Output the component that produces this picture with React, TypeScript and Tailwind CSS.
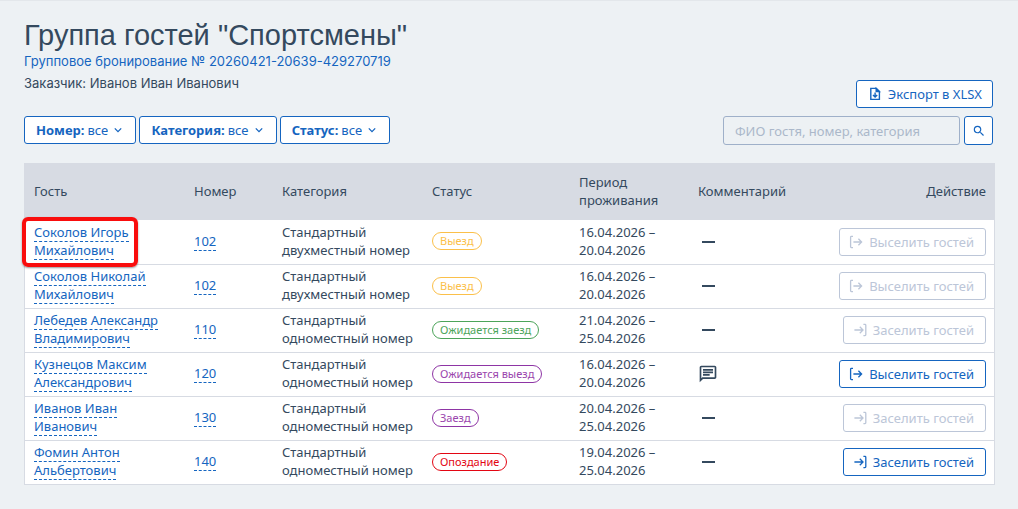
import { MdSearch, MdOutlineChat } from 'react-icons/md';

type Action = 'out' | 'in';

interface Guest {
  name: [string, string];
  room: string;
  category: string;
  status: string;
  tone: string;
  from: string;
  to: string;
  comment?: boolean;
  action: Action;
  enabled?: boolean;
  marked?: boolean;
}

const amber = 'border-[#fbc04a] text-[#fbc04a]';
const green = 'border-[#4ca45a] text-[#4ca45a]';
const purple = 'border-[#8e35a5] text-[#9a45ad]';
const red = 'border-[#e30613] text-[#e30613]';

const guests: Guest[] = [
  { name: ['Соколов Игорь', 'Михайлович'], room: '102', category: 'двухместный номер', status: 'Выезд', tone: amber, from: '16.04.2026', to: '20.04.2026', action: 'out', marked: true },
  { name: ['Соколов Николай', 'Михайлович'], room: '102', category: 'двухместный номер', status: 'Выезд', tone: amber, from: '16.04.2026', to: '20.04.2026', action: 'out' },
  { name: ['Лебедев Александр', 'Владимирович'], room: '110', category: 'одноместный номер', status: 'Ожидается заезд', tone: green, from: '21.04.2026', to: '25.04.2026', action: 'in' },
  { name: ['Кузнецов Максим', 'Александрович'], room: '120', category: 'одноместный номер', status: 'Ожидается выезд', tone: purple, from: '16.04.2026', to: '20.04.2026', comment: true, action: 'out', enabled: true },
  { name: ['Иванов Иван', 'Иванович'], room: '130', category: 'одноместный номер', status: 'Заезд', tone: purple, from: '20.04.2026', to: '25.04.2026', action: 'in' },
  { name: ['Фомин Антон', 'Альбертович'], room: '140', category: 'одноместный номер', status: 'Опоздание', tone: red, from: '19.04.2026', to: '25.04.2026', action: 'in', enabled: true },
];

function ActionIcon({ kind }: { kind: Action }) {
  return (
    <svg viewBox="0 0 14 14" className="h-3.5 w-3.5" fill="none" stroke="currentColor" strokeWidth="1.3" aria-hidden="true">
      {kind === 'out' ? (
        <>
          <path d="M4 1.4H2.4Q1.6 1.4 1.6 2.2V11.8Q1.6 12.6 2.4 12.6H4" />
          <path d="M4.4 7H12.6M9.4 3.8L12.6 7L9.4 10.2" />
        </>
      ) : (
        <>
          <path d="M10.4 1.4H12Q12.8 1.4 12.8 2.2V11.8Q12.8 12.6 12 12.6H10.4" />
          <path d="M1.4 7H10M6.8 3.8L10 7L6.8 10.2" />
        </>
      )}
    </svg>
  );
}

function Filter({ id, label }: { id: string; label: string }) {
  return (
    <div className="flex h-7 items-center rounded-[3px] border border-[#1565c0] bg-white px-[11px] text-[#1565c0]">
      <label htmlFor={id} className="font-bold">{label}:</label>
      <select id={id} className="ml-[3px] appearance-none bg-transparent">
        <option>все</option>
      </select>
      <svg viewBox="0 0 10 10" className="mr-px ml-[5px] h-2.5 w-2.5" fill="none" stroke="currentColor" strokeWidth="1.3" aria-hidden="true">
        <path d="M1.8 3.4L5 6.6L8.2 3.4" />
      </svg>
    </div>
  );
}

const link = 'border-b border-dashed border-[#1565c0] text-[#1565c0]';
const line = 'border-b border-[#d7dbe3] align-middle';
const cell = `${line} px-[9px] pt-[2px] pb-[5px]`;

export default function App() {
  return (
    <main className="min-h-screen border-t border-[#e3e7eb] bg-[#edf1f4] pr-[23px] pl-6 pt-[17px] pb-6 font-['Noto_Sans','Open_Sans',sans-serif] text-[13px] leading-[18px] text-[#34495e]">
      <header>
        <h1 className="font-['Liberation_Sans',Arial,sans-serif] text-[29px] leading-[34px]">Группа гостей "Спортсмены"</h1>
        <a href="#booking" className="block pb-0.5 font-['Inter',sans-serif] text-[#1565c0]">
          Групповое бронирование № 20260421-20639-429270719
        </a>
      </header>
      <div className="flex justify-between pr-0.5">
        <p className="pt-0.5 font-['Inter',sans-serif]">Заказчик: Иванов Иван Иванович</p>
        <button type="button" className="mt-2 flex h-7 items-center rounded-[3px] border border-[#1565c0] bg-white pr-2.5 pl-3 text-[#1565c0]">
          <svg viewBox="0 0 12 14" className="mr-[7px] h-3.5 w-3" fill="none" stroke="currentColor" strokeWidth="1.4" aria-hidden="true">
            <path d="M1.8 1.4H7.2L10.4 4.6V12.4H1.8Z" />
            <path d="M7.2 1.4V4.6H10.4Z" fill="currentColor" />
            <path d="M6.1 5.6V10M4 8L6.1 10.1L8.2 8" />
          </svg>
          Экспорт в XLSX
        </button>
      </div>
      <div className="mt-2 flex flex-wrap items-start justify-between gap-y-2 pr-0.5">
        <div className="flex gap-[3px]">
          <Filter id="room" label="Номер" />
          <Filter id="category" label="Категория" />
          <Filter id="status" label="Статус" />
        </div>
        <form className="flex gap-1">
          <input type="search" aria-label="Поиск гостя" placeholder="ФИО гостя, номер, категория" className="h-[29px] w-[237px] rounded-[3px] border border-[#9fb0c9] px-[11px] placeholder:text-[#abb8ca]" />
          <button type="button" aria-label="Найти" className="flex h-[29px] w-[29px] items-center justify-center rounded-[3px] border border-[#1565c0] bg-white text-[#1565c0]">
            <MdSearch className="h-3.5 w-3.5" />
          </button>
        </form>
      </div>
      <table className="mt-[18px] w-full table-fixed border-separate border-spacing-0 border-x border-[#d7dbe3] bg-white text-left">
        <colgroup>
          <col className="w-[160px]" />
          <col className="w-[88px]" />
          <col className="w-[150px]" />
          <col className="w-[147px]" />
          <col className="w-[119px]" />
          <col className="w-[120px]" />
          <col />
        </colgroup>
        <thead className="bg-[#d7dbe3]">
          <tr className="h-[57px]">
            {['Гость', 'Номер', 'Категория', 'Статус', 'Период проживания', 'Комментарий'].map((h) => (
              <th key={h} scope="col" className="px-[9px] pb-0.5 font-normal">{h}</th>
            ))}
            <th scope="col" className="px-2 pb-0.5 text-right font-normal">Действие</th>
          </tr>
        </thead>
        <tbody>
          {guests.map((g) => (
            <tr key={g.name.join()} className="h-11 first:h-[45px]">
              <td className={`${cell} relative`}>
                <a href="#guest" className={link}>{g.name[0]}<br />{g.name[1]}</a>
                {g.marked && (
                  <span className="pointer-events-none absolute -top-[3px] -left-[3px] h-[50px] w-[116px] rounded-md border-4 border-[#f90d0d] shadow-[0_1px_2px_rgba(0,0,0,0.4)]" />
                )}
              </td>
              <td className={cell}><a href="#room" className={link}>{g.room}</a></td>
              <td className={cell}>Стандартный<br />{g.category}</td>
              <td className={cell}>
                <span className={`inline-flex h-[18px] items-center rounded-full border px-[7px] align-middle text-[11px] ${g.tone}`}>{g.status}</span>
              </td>
              <td className={cell}>{g.from} –<br />{g.to}</td>
              <td className={`${line} px-[9px] pb-px`}>
                {g.comment ? (
                  <MdOutlineChat className="h-5 w-5" aria-label="Комментарий" />
                ) : (
                  <span className="ml-1 block h-0.5 w-[13px] bg-[#34495e]" />
                )}
              </td>
              <td className={`${line} px-2 pb-px`}>
                <button
                  type="button"
                  disabled={!g.enabled}
                  className={`ml-auto flex h-7 items-center gap-1.5 rounded-[3px] border bg-white pr-[11px] pl-[9px] ${g.enabled ? 'border-[#1565c0] text-[#1565c0]' : 'border-[#bcc6d8] text-[#bcc6d8]'}`}
                >
                  <ActionIcon kind={g.action} />
                  {g.action === 'out' ? 'Выселить гостей' : 'Заселить гостей'}
                </button>
              </td>
            </tr>
          ))}
        </tbody>
      </table>
    </main>
  );
}
